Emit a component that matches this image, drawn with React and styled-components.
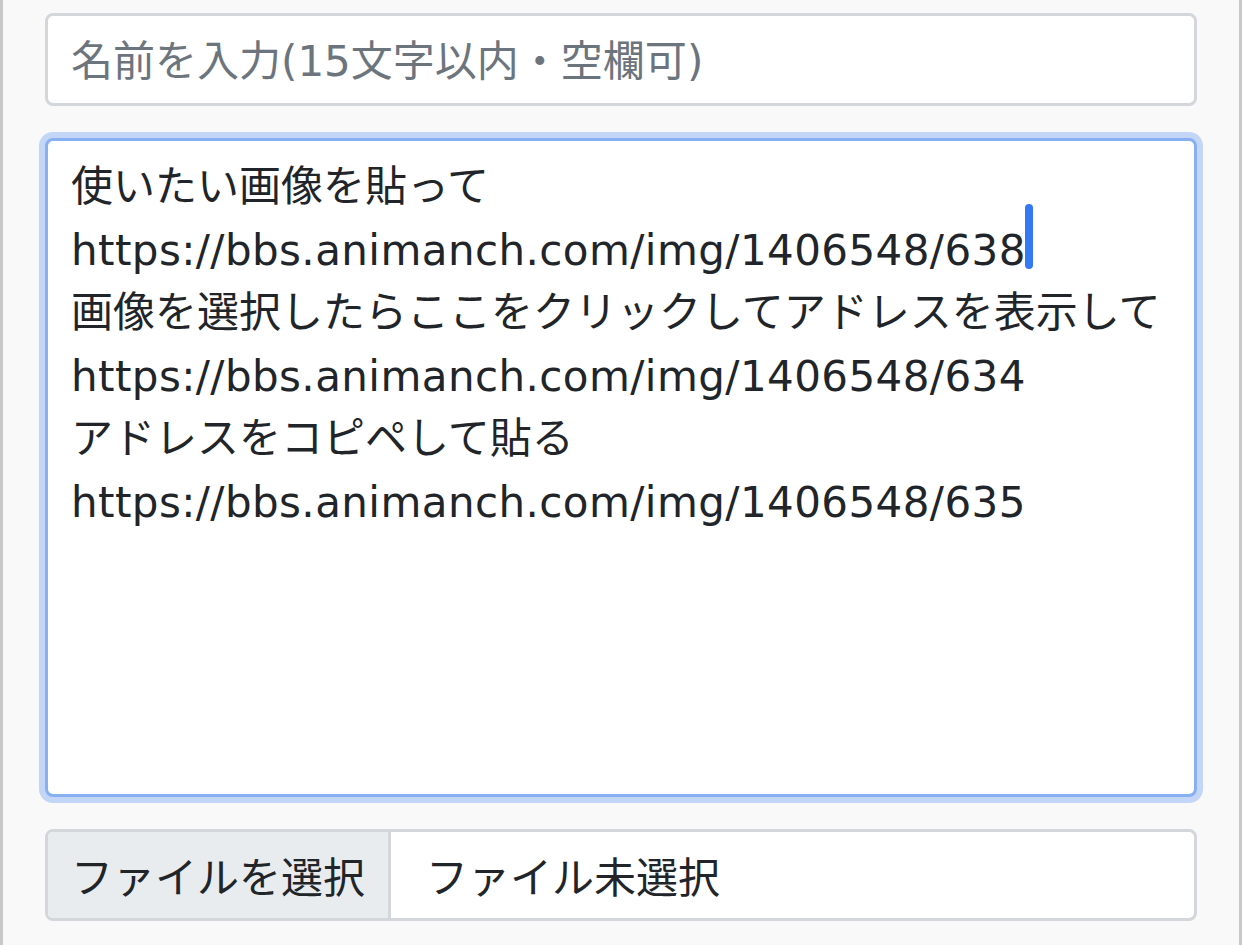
import React from "react";
import styled, { createGlobalStyle } from "styled-components";

const GlobalStyle = createGlobalStyle`
  html, body {
    margin: 0;
    padding: 0;
    background: #f8f9fa;
  }
  body {
    font-family: "DejaVu Sans", "Noto Sans CJK JP", sans-serif;
    color: #212529;
  }
`;

const Page = styled.div`
  box-sizing: border-box;
  width: 1242px;
  height: 945px;
  background: #f9f9fa;
  border-left: 3px solid #c8c8c8;
  border-right: 3px solid #c8c8c8;
  padding: 13px 42px 0 42px;
  display: flex;
  flex-direction: column;
  gap: 32px;
`;

const Field = styled.div`
  box-sizing: border-box;
  width: 100%;
  background: #fff;
  border: 3px solid ${(p) => (p.$focused ? "#86b0f2" : "#d3d6db")};
  border-radius: 8px;
  font-size: 42px;
  box-shadow: ${(p) => (p.$focused ? "0 0 0 6px #c3d6f7" : "none")};
`;

const Line = styled.div`
  height: 63px;
  line-height: ${(p) => (p.$latin ? "75px" : "65px")};
  white-space: nowrap;
  letter-spacing: ${(p) => (p.$latin ? "0.42px" : "0")};
  font-family: ${(p) =>
    p.$latin ? '"DejaVu Sans", sans-serif' : '"Noto Sans CJK JP", sans-serif'};
`;

const Latin = styled.span`
  font-family: "DejaVu Sans", sans-serif;
`;

const NameInput = styled(Field)`
  padding: 9px 23px 15px;
  color: #6c757d;
`;

const TextArea = styled(Field)`
  height: 659px;
  padding: 9px 23px;
  color: #212529;
`;

/* text caret drawn over the end of the second line */
const Caret = styled.span`
  position: relative;
  display: inline-block;
  width: 0;
  height: 0;

  &::after {
    content: "";
    position: absolute;
    left: -1px;
    bottom: -4px;
    width: 8px;
    height: 65px;
    background: #3478f6;
    border-radius: 4px;
  }
`;

const FileInput = styled(Field)`
  display: flex;
  align-items: stretch;
  overflow: hidden;
  height: 92px;
  font-family: "Noto Sans CJK JP", sans-serif;
`;

const FileButton = styled.div`
  display: flex;
  align-items: center;
  padding: 0 23px 2px;
  background: #e9ecef;
  border-right: 3px solid #d3d6db;
  color: #212529;
`;

const FileName = styled.div`
  display: flex;
  align-items: center;
  padding: 0 0 2px 35px;
  color: #212529;
`;

const lines = [
  { text: "使いたい画像を貼って" },
  { text: "https://bbs.animanch.com/img/1406548/638", latin: true, caret: true },
  { text: "画像を選択したらここをクリックしてアドレスを表示して" },
  { text: "https://bbs.animanch.com/img/1406548/634", latin: true },
  { text: "アドレスをコピペして貼る" },
  { text: "https://bbs.animanch.com/img/1406548/635", latin: true },
];

export default function App() {
  return (
    <>
      <GlobalStyle />
      <Page>
        <NameInput>
          <Line>
            名前を入力<Latin>(15</Latin>文字以内・空欄可<Latin>)</Latin>
          </Line>
        </NameInput>
        <TextArea $focused>
          {lines.map((l, i) => (
            <Line key={i} $latin={l.latin}>
              {l.text}
              {l.caret && <Caret />}
            </Line>
          ))}
        </TextArea>
        <FileInput>
          <FileButton>ファイルを選択</FileButton>
          <FileName>ファイル未選択</FileName>
        </FileInput>
      </Page>
    </>
  );
}
